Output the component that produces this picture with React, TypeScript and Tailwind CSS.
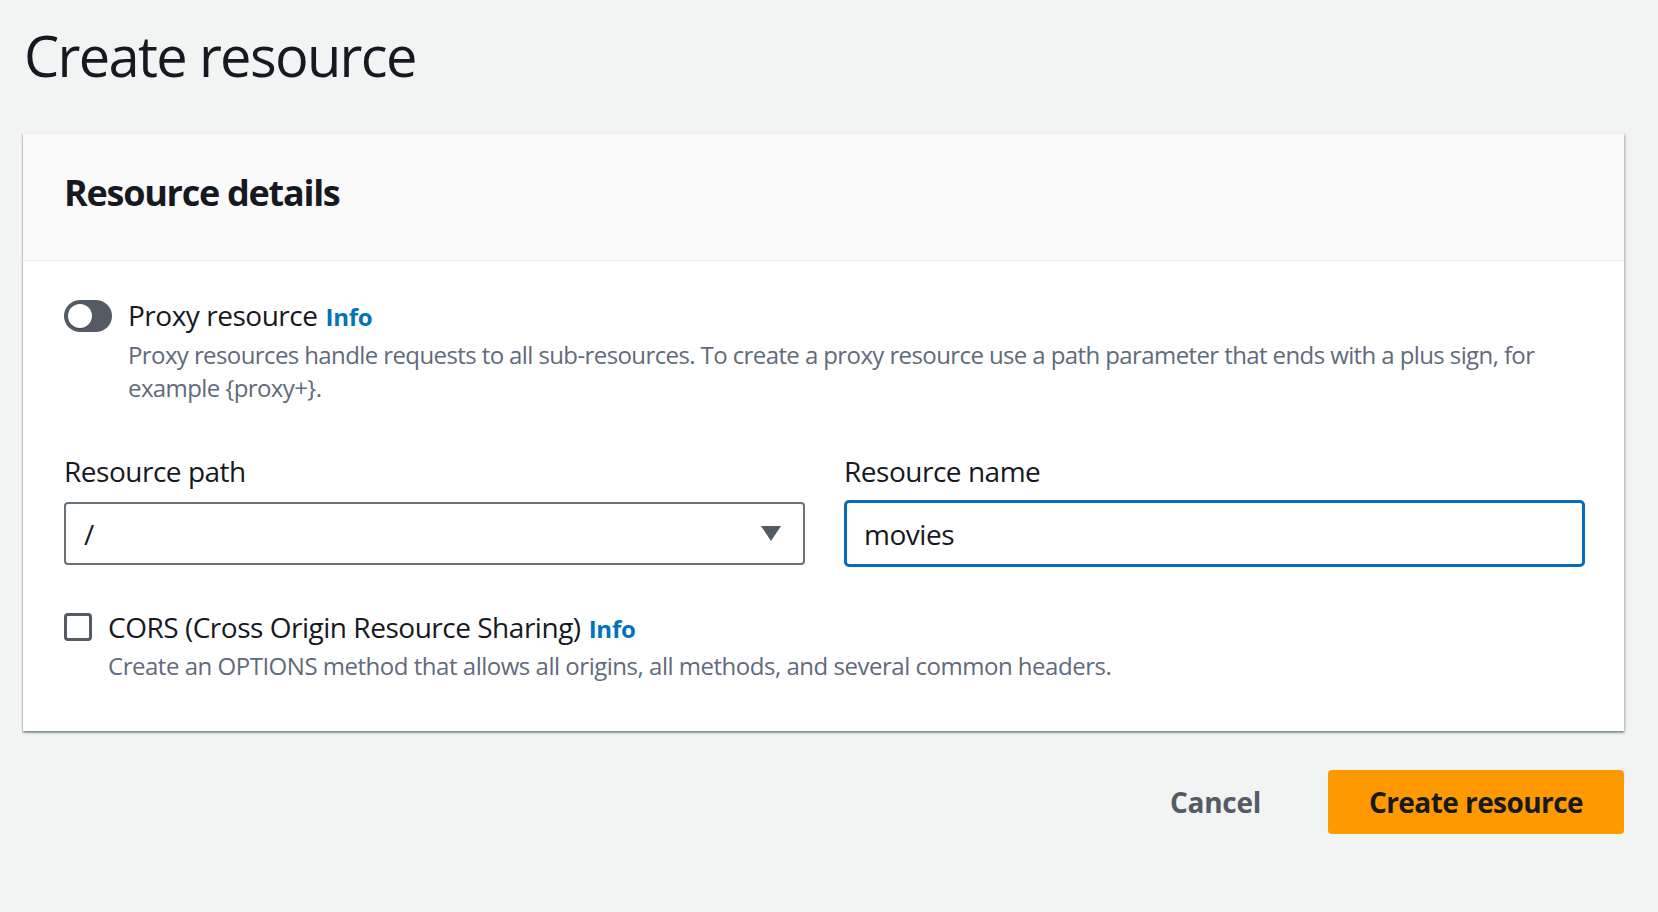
import React from 'react';

// Toggle switch (off state)
const Toggle: React.FC = () => {
  return (
    <span className="relative mt-[7px] inline-block h-[32px] w-[48px] shrink-0 rounded-full bg-[#545b64]">
      <span className="absolute left-[4px] top-[4px] h-[24px] w-[24px] rounded-full bg-white shadow-[0_1px_1px_rgba(0,0,0,0.25)]" />
    </span>
  );
};

const Info: React.FC = () => (
  <a href="#" className="ml-[8px] text-[24px] font-bold leading-none tracking-[-0.01em] text-[#0073bb]">
    Info
  </a>
);

export default function App() {
  const proxyHelp =
    'Proxy resources handle requests to all sub-resources. To create a proxy resource use a path parameter that ends with a plus sign, for example {proxy+}.';

  return (
    <div
      className="min-h-screen bg-[#f2f3f3] pl-[23px] pr-[34px] pt-[23px] text-[#16191f]"
      style={{ fontFamily: '"Open Sans", "Noto Sans", Arial, sans-serif' }}
    >
      <h1 className="pl-[1px] text-[56px] font-normal leading-[64px] tracking-[-0.03em]">Create resource</h1>

      <div className="mt-[46px] border-t border-[#eaeded] bg-white shadow-[0_2px_2px_0_rgba(0,28,36,0.35),2px_1px_2px_0_rgba(0,28,36,0.12),-1px_1px_1px_0_rgba(0,28,36,0.12)]">
        <div className="h-[127px] border-b border-[#eaeded] bg-[#fafafa] pl-[41px] pt-[37px]">
          <h2 className="text-[36px] font-bold leading-[44px] tracking-[-0.035em]">Resource details</h2>
        </div>

        <div className="pb-[49px] pl-[41px] pr-[39px] pt-[32px] tracking-[-0.03em]">
          {/* Proxy resource */}
          <div className="flex gap-[16px]">
            <Toggle />
            <div>
              <div className="h-[44px] text-[28px] leading-[44px]">
                Proxy resource
                <Info />
              </div>
              <p className="mt-[1px] text-[24px] leading-[33px] tracking-[-0.025em] text-[#5f6b7a]">{proxyHelp}</p>
            </div>
          </div>

          {/* Path + name */}
          <div className="mt-[45px] grid grid-cols-2 gap-x-[39px]">
            <div>
              <label className="block text-[28px] leading-[44px]">Resource path</label>
              <div className="mt-[9px] flex h-[63px] items-center justify-between rounded-[4px] border-2 border-[#687078] bg-white pl-[18px] pr-[22px] text-[28px]">
                <span>/</span>
                <svg width="20" height="16" viewBox="0 0 20 16">
                  <path d="M0 0 H20 L10 15 Z" fill="#545b64" />
                </svg>
              </div>
            </div>
            <div>
              <label className="block text-[28px] leading-[44px]">Resource name</label>
              <div className="mt-[7px] flex h-[67px] items-center rounded-[5px] border-[3px] border-[#0a6bbd] bg-white pl-[17px] text-[28px]">
                movies
              </div>
            </div>
          </div>

          {/* CORS */}
          <div className="mt-[38px] flex gap-[16px]">
            <span className="mt-[8px] block h-[28px] w-[28px] shrink-0 rounded-[4px] border-[3px] border-[#545b64] bg-white" />
            <div>
              <div className="h-[44px] text-[28px] leading-[44px]">
                CORS (Cross Origin Resource Sharing)
                <Info />
              </div>
              <p className="text-[24px] leading-[33px] tracking-[-0.02em] text-[#5f6b7a]">
                Create an OPTIONS method that allows all origins, all methods, and several common headers.
              </p>
            </div>
          </div>
        </div>
      </div>

      {/* Actions */}
      <div className="mt-[39px] flex items-center justify-end gap-[31px]">
        <button className="px-[36px] text-[28px] font-bold tracking-[-0.01em] text-[#545b64]">Cancel</button>
        <button className="h-[64px] w-[296px] rounded-[4px] bg-[#ff9900] text-[28px] font-bold tracking-[-0.02em] text-[#16191f]">
          Create resource
        </button>
      </div>
    </div>
  );
}
